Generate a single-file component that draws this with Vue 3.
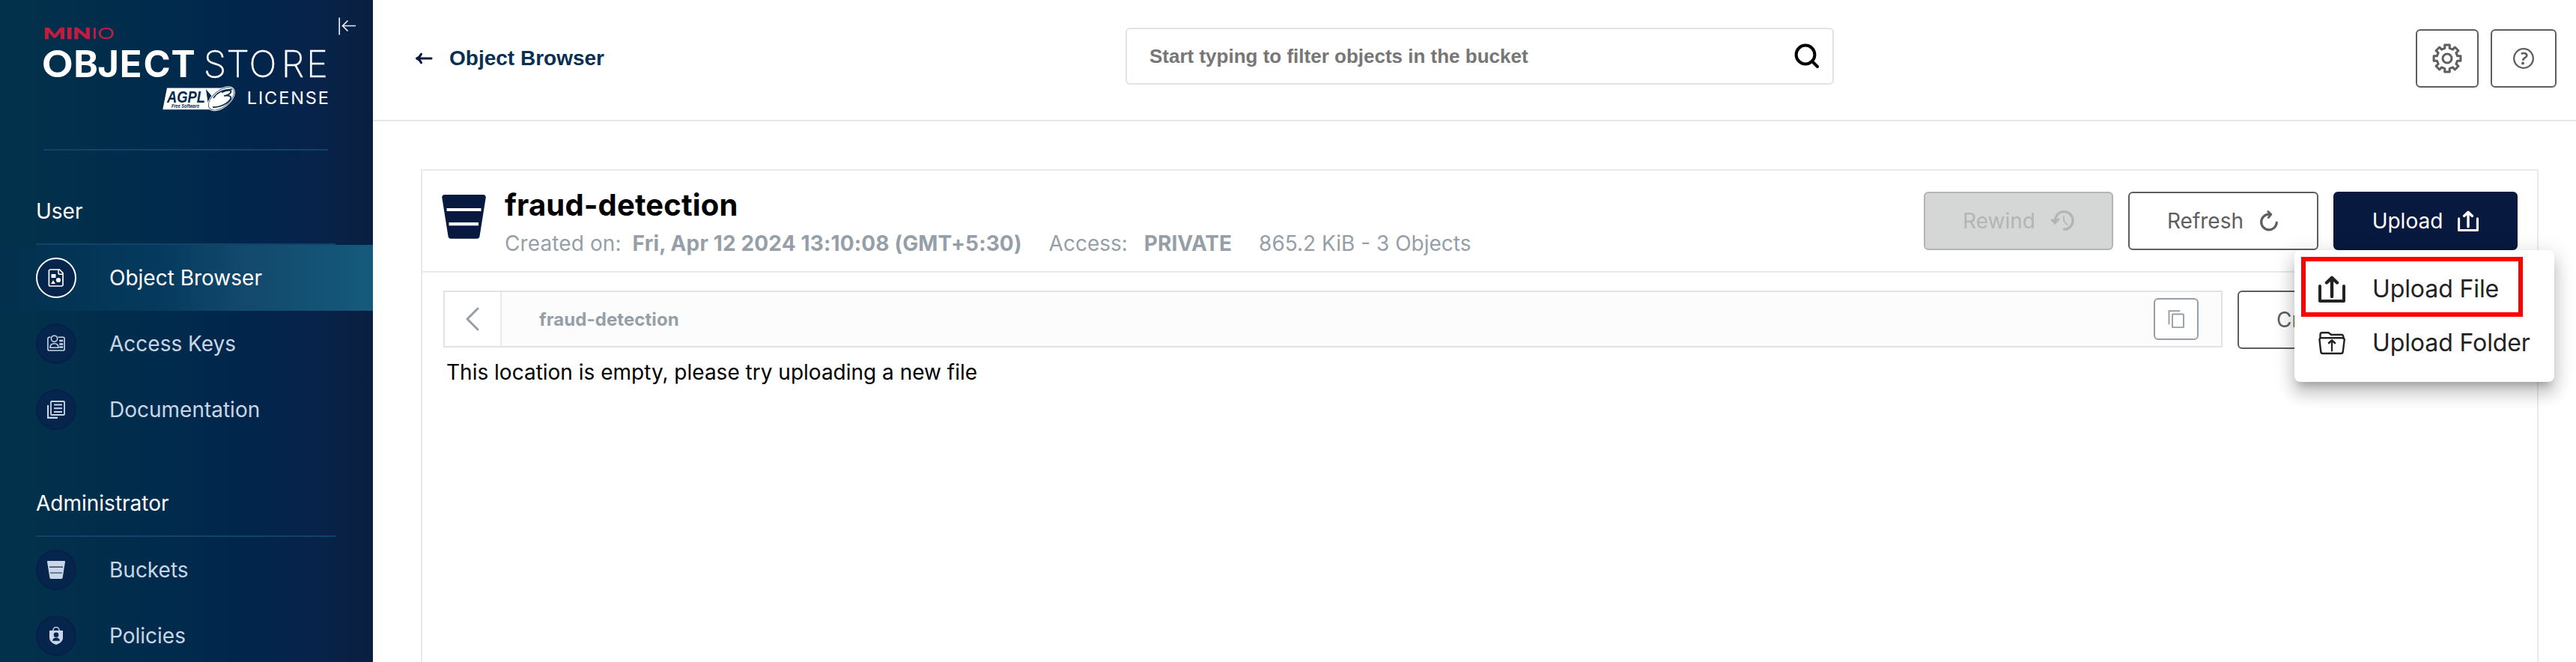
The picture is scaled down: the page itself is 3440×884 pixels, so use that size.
<script setup>
const groups = [
  {
    title: 'User',
    items: [
      { label: 'Object Browser', icon: 'browser', active: true },
      { label: 'Access Keys', icon: 'keys' },
      { label: 'Documentation', icon: 'docs' },
    ],
  },
  {
    title: 'Administrator',
    items: [
      { label: 'Buckets', icon: 'bucket' },
      { label: 'Policies', icon: 'policy' },
    ],
  },
]

// Eight-toothed gear outline centred on 20,20
function gearPath() {
  const pts = []
  const tooth = [[14, -13], [18.2, -10.5], [18.2, 10.5], [14, 13]]
  for (let k = 0; k < 8; k++) {
    for (const [r, off] of tooth) {
      const a = ((k * 45 + off) * Math.PI) / 180
      pts.push(`${(20 + r * Math.sin(a)).toFixed(2)} ${(20 - r * Math.cos(a)).toFixed(2)}`)
    }
  }
  return `M${pts.join('L')}Z`
}
const gear = gearPath()
</script>

<template>
  <div class="app">
    <aside class="sidebar">
      <svg class="collapse" viewBox="0 0 24 24" width="24" height="24">
        <path d="M1.2 0.5V23.5M5.5 11.5H23M12.5 4.5L5.5 11.5L12.5 18.5" fill="none" stroke="#e9edf3" stroke-width="1.7" />
      </svg>
      <div class="brand">
        <svg class="logo" viewBox="58 30 380 122" width="380" height="122">
          <g class="minio">
            <text class="minio-bold" x="57.5" y="51.5" textLength="64" lengthAdjust="spacingAndGlyphs">MIN</text>
            <text class="minio-thin" x="122" y="51.5" textLength="30.5" lengthAdjust="spacingAndGlyphs">IO</text>
          </g>
          <text class="word-bold" x="56.6 97.8 130.3 159.8 191.5 229.6" y="103.2">OB<tspan class="wide">JEC</tspan>T</text>
          <text class="word-thin" x="271.8 302.3 332.6 375.7 408.9" y="103.2">STORE</text>
          <g>
            <path d="M223 117.5H300L284 146.2H217.3Z" fill="#fff" />
            <text class="agpl" x="223" y="137.3" textLength="51" lengthAdjust="spacingAndGlyphs">AGPL</text>
            <text class="free" x="229" y="144" textLength="37" lengthAdjust="spacingAndGlyphs">Free Software</text>
            <path d="M275 119L277.6 137L282.5 128Z" fill="#01294b" />
            <ellipse cx="295.5" cy="131.8" rx="20.5" ry="11" transform="rotate(-39 295.5 131.8)" fill="#fff" stroke="#01294b" stroke-width="1.2" />
            <path d="M285 131C290 123 297 119 310 119.5" fill="none" stroke="#01294b" stroke-width="1.6" />
            <path d="M296 123.5C303 120 309 119.5 308.5 122.5C308 125.5 303 127.5 299 128C306 127 309.5 128.5 308 132C304 139 292 144 284 143" fill="none" stroke="#01294b" stroke-width="1.7" />
            <ellipse cx="295.5" cy="131.8" rx="21" ry="11.6" transform="rotate(-39 295.5 131.8)" fill="none" stroke="#fff" stroke-width="1" />
          </g>
          <text class="license" x="329.8" y="138.6" textLength="109" lengthAdjust="spacing">LICENSE</text>
        </svg>
      </div>

      <nav v-for="g in groups" :key="g.title" class="group">
        <h2 class="group-title">{{ g.title }}</h2>
        <div v-for="it in g.items" :key="it.label" class="item" :class="{ active: it.active }">
          <span class="bubble">
            <svg v-if="it.icon === 'browser'" viewBox="0 0 24 24" width="24" height="24">
              <path d="M4.2 1H16.5L21 5.6V21.2a1.8 1.8 0 0 1-1.8 1.8H4.2A1.8 1.8 0 0 1 2.4 21.2V2.8A1.8 1.8 0 0 1 4.2 1Z" fill="none" stroke="#fff" stroke-width="1.7" />
              <path d="M15 1V5.4a1.8 1.8 0 0 0 1.8 1.8H21" fill="none" stroke="#fff" stroke-width="1.5" />
              <path d="M5.5 7h6v5h-6ZM8 15.2L11 20H5Z" fill="#fff" />
              <circle cx="15" cy="15" r="3.1" fill="#fff" />
            </svg>
            <svg v-else-if="it.icon === 'keys'" viewBox="0 0 24 24" width="24" height="24" fill="none" stroke="#c8d6e8" stroke-width="1.6">
              <path d="M4.5 3.2H3A2.1 2.1 0 0 0 .9 5.3V18.9a2.1 2.1 0 0 0 2.1 2.1H21a2.1 2.1 0 0 0 2.1-2.1V5.3A2.1 2.1 0 0 0 21 3.2H14.5" />
              <circle cx="9.5" cy="5.3" r="4.1" />
              <path d="M4 17.3c0-4 2.6-5.6 5.5-5.600s5.500 1.600 5.500 5.600Z" />
              <path d="M16.2 8h5M16.2 12.5h5M16.2 16.5h5" stroke-width="2.6" />
            </svg>
            <svg v-else-if="it.icon === 'docs'" viewBox="0 0 24 24" width="24" height="24" fill="none" stroke="#c8d6e8">
              <rect x="5" y="1" width="18" height="18" rx="1" stroke-width="1.8" />
              <path d="M1 6V22.8H14" stroke-width="2.2" />
              <path d="M9 5.5H20M9 10.2H20M9 15H20" stroke-width="2" />
            </svg>
            <svg v-else-if="it.icon === 'bucket'" viewBox="0 0 24 24" width="24" height="24">
              <path d="M1 0H23a1 1 0 0 1 1 1.2L20.6 22.6a1.6 1.6 0 0 1-1.6 1.4H5a1.6 1.6 0 0 1-1.6-1.4L0 1.2A1 1 0 0 1 1 0Z" fill="#c8d6e8" />
              <path d="M3 8.2H21M4 16H20" stroke="#06254c" stroke-width="1.2" />
            </svg>
            <svg v-else viewBox="0 0 24 24" width="24" height="24">
              <path d="M8 5.5V4.5a4 4 0 0 1 8 0V5.5" fill="none" stroke="#c8d6e8" stroke-width="1.5" />
              <path d="M3 5H21V14.5C21 19.5 16.5 22.5 12 24C7.5 22.5 3 19.5 3 14.5Z" fill="#c8d6e8" />
              <circle cx="12" cy="10.7" r="3.3" fill="#06254c" />
              <path d="M7 18.800c.5-3 2.500-4.300 5-4.300s4.500 1.300 5 4.300Z" fill="#06254c" />
            </svg>
          </span>
          <span class="item-label">{{ it.label }}</span>
        </div>
      </nav>
    </aside>

    <main class="main">
      <header class="topbar">
        <div class="back">
          <svg viewBox="0 0 24 16" width="24" height="16">
            <path d="M2.5 8H22M8.5 2.2C7 5.5 5.5 7 2.5 8C5.5 9 7 10.5 8.5 13.8" fill="none" stroke="#081c42" stroke-width="3" stroke-linecap="round" stroke-linejoin="round" />
          </svg>
          <span>Object Browser</span>
        </div>
        <div class="search">
          <span>Start typing to filter objects in the bucket</span>
          <svg viewBox="0 0 34 34" width="34" height="34" fill="none" stroke="#000" stroke-width="4">
            <circle cx="15" cy="15" r="12.4" />
            <path d="M24 24L31 31" stroke-linecap="round" />
          </svg>
        </div>
        <div class="actions">
          <button class="square cog">
            <svg viewBox="0 0 40 40" width="40" height="40" fill="none" stroke="#5e5e5e">
              <path :d="gear" stroke-width="3" stroke-linejoin="round" />
              <circle cx="20" cy="20" r="6" stroke-width="3" />
            </svg>
          </button>
          <button class="square help">
            <svg viewBox="0 0 28 28" width="28" height="28">
              <circle cx="14" cy="14" r="12.8" fill="none" stroke="#5e5e5e" stroke-width="2.3" />
              <path d="M10.800 7.800C12 7.200 13.200 7 14.400 7C17 7 18.300 8.400 18.300 10.300C18.300 13.200 13.600 12.600 13 16.800" fill="none" stroke="#5e5e5e" stroke-width="2.7" />
              <circle cx="13" cy="20.5" r="1.9" fill="#5e5e5e" />
            </svg>
          </button>
        </div>
      </header>

      <section class="panel">
        <div class="panel-head">
          <svg class="bucket" viewBox="0 0 59 59" width="59" height="59">
            <path d="M3.5 0H55.5a3.3 3.3 0 0 1 3.2 3.9L50.5 55.5a4 4 0 0 1-4 3.3H12.5a4 4 0 0 1-4-3.3L.3 3.9A3.3 3.3 0 0 1 3.5 0Z" fill="#07193e" />
            <path d="M6.5 20H52.5M9.5 39.2H49" stroke="#fff" stroke-width="4.2" />
          </svg>
          <div class="titles">
            <h1>fraud-detection</h1>
            <div class="meta">
              <span class="created">Created on:</span>
              <b class="date">Fri, Apr 12 2024 13:10:08 (GMT+5:30)</b>
              <span class="access">Access:</span>
              <b class="private">PRIVATE</b>
              <span>865.2 KiB - 3 Objects</span>
            </div>
          </div>
          <div class="buttons">
            <button class="btn rewind">
              <span>Rewind</span>
              <svg viewBox="0 0 32 28" width="32" height="28" fill="none" stroke="#b3b4b3">
                <path d="M6.500 14A11.800 11.800 0 1 1 18.300 25.300" stroke-width="3.300" stroke-linecap="round" />
                <path d="M1.800 12.800L6.500 17.300L11.300 11.800L6.500 13.500Z" stroke-width="2.500" stroke-linejoin="round" fill="#b3b4b3" />
                <path d="M18 7.500V14L22.500 19" stroke-width="1.700" stroke-linecap="round" />
              </svg>
            </button>
            <button class="btn refresh">
              <span>Refresh</span>
              <svg viewBox="0 0 28 28" width="28" height="28" fill="none" stroke="#5e5e5e">
                <path d="M14 5.200A10.300 10.300 0 1 0 24.300 16" stroke-width="3.200" stroke-linecap="round" />
                <path d="M12.800 1.500L16.800 5.300L13.300 9.500" stroke-width="2.800" stroke-linecap="round" stroke-linejoin="round" />
              </svg>
            </button>
            <button class="btn primary">
              <span>Upload</span>
              <svg viewBox="0 0 36 36" width="28" height="28" fill="none" stroke="#fff" stroke-linecap="round" stroke-linejoin="round">
                <path d="M2 14V34H34V14" stroke-width="4" />
                <path d="M18 28V5M11 9.500L18 2.800L25 9.500" stroke-width="4.400" />
              </svg>
            </button>
          </div>
        </div>

        <div class="panel-body">
          <div class="path-row">
            <div class="path-bar">
              <span class="path-back">
                <svg viewBox="0 0 20 32" width="20" height="32">
                  <path d="M17 2L3 16L17 30" fill="none" stroke="#969fa8" stroke-width="3" stroke-linecap="round" stroke-linejoin="round" />
                </svg>
              </span>
              <span class="path-name">fraud-detection</span>
              <span class="copy">
                <svg viewBox="0 0 22 24" width="22" height="24" fill="none" stroke="#969fa8" stroke-width="1.9">
                  <path d="M1.5 18.5V1.3H15.5" stroke-linecap="round" />
                  <rect x="6" y="5.5" width="15" height="17.8" rx="1" />
                </svg>
              </span>
            </div>
            <button class="btn create"><span>Create new path</span></button>
          </div>
          <p class="empty">This location is empty, please try uploading a new file</p>
        </div>
      </section>

      <div class="menu">
        <div class="menu-item">
          <svg viewBox="0 0 36 36" width="36" height="36" fill="none" stroke="#222" stroke-linecap="round" stroke-linejoin="round">
            <path d="M2 14V34H34V14" stroke-width="4" />
            <path d="M18 28V5M11 9.500L18 2.800L25 9.500" stroke-width="4.400" />
          </svg>
          <span>Upload File</span>
        </div>
        <div class="menu-item">
          <svg viewBox="0 0 36 36" width="36" height="36" fill="none" stroke="#222" stroke-linecap="round" stroke-linejoin="round">
            <path d="M2.500 11V6.500A2.500 2.500 0 0 1 5 4.200H13.500L17 7H31A2.300 2.300 0 0 1 33.300 9.500V12" stroke-width="2.400" />
            <path d="M3.500 11.300H32.500A2.200 2.200 0 0 1 34.700 13.800L32.700 29.800A2.600 2.600 0 0 1 30 32H6A2.600 2.600 0 0 1 3.300 29.800L1.500 13.800A2.200 2.200 0 0 1 3.500 11.300Z" stroke-width="2.400" />
            <path d="M18 28.500V16" stroke-width="2.200" />
            <path d="M14 18L18 14.500L22 18" stroke-width="2.600" />
          </svg>
          <span>Upload Folder</span>
        </div>
        <div class="highlight"></div>
      </div>
    </main>
  </div>
</template>

<style>
body { margin: 0; background: #fff; }
</style>

<style scoped>
.app {
  display: flex;
  width: 3440px;
  height: 884px;
  overflow: hidden;
  font-family: Inter, sans-serif;
  font-size: 28px;
  color: #000;
}
.app svg { display: block; flex: none; }
.sidebar {
  position: relative;
  width: 498px;
  flex: none;
  background: linear-gradient(90deg, #02324b 0%, #012a4c 48%, #01254b 66%, #07234a 84%, #0a1f40 100%);
}
.collapse { position: absolute; left: 452px; top: 23px; }
.brand {
  margin: 0 60px 0 58px;
  padding-top: 30px;
  height: 169px;
  border-bottom: 2px solid #10426a;
}
.logo { overflow: visible; }
.minio { fill: #c51b3f; stroke: #c51b3f; }
.minio-bold { font: 900 21.5px Lato, sans-serif; stroke-width: .5; }
.minio-thin { font: 400 21.5px Lato, sans-serif; stroke-width: 0; }
.word-bold { font: 900 50px Lato, sans-serif; fill: #fff; }
.wide { font: 700 49px Inter, sans-serif; }
.word-thin { font: 200 49px Inter, sans-serif; fill: #fff; stroke: #fff; stroke-width: .3; }
.agpl { font: italic 700 22.5px "Liberation Sans", sans-serif; fill: #01294b; }
.free { font: italic 700 6.5px "Liberation Sans", sans-serif; fill: #01294b; }
.license { font: 400 23.5px Inter, sans-serif; fill: #fff; }

.group-title {
  margin: 0 50px 0 48px;
  height: 37px;
  line-height: 34px;
  padding: 64px 0 23px;
  font-size: 28px;
  font-weight: 400;
  color: #fff;
  border-bottom: 2px solid #10426a;
}
.item {
  display: flex;
  align-items: center;
  gap: 44px;
  height: 88px;
  padding-left: 48px;
  color: #c8d6e8;
}
.item.active {
  color: #fff;
  background: linear-gradient(90deg, #02304d 0%, #053a5e 42%, #12496c 66%, #155a7c 100%);
}
.bubble {
  box-sizing: border-box;
  display: flex;
  align-items: center;
  justify-content: center;
  width: 54px;
  height: 54px;
  border-radius: 50%;
  border: 2px solid #062048;
  background: #06254c;
}
.active .bubble { border-color: #fff; }

.main { position: relative; flex: 1; background: #fff; }
.topbar {
  box-sizing: border-box;
  display: flex;
  align-items: flex-start;
  height: 162px;
  padding: 37px 26px 0 56px;
  border-bottom: 2px solid #e5e5e5;
}
.back {
  display: flex;
  align-items: center;
  gap: 22px;
  width: 949px;
  height: 82px;
  font: 700 28px "Liberation Sans", sans-serif;
  color: #073052;
}
.search {
  box-sizing: border-box;
  display: flex;
  align-items: center;
  justify-content: space-between;
  width: 946px;
  height: 76px;
  padding: 0 17px 0 30px;
  border: 2px solid #e2e2e2;
  border-radius: 6px;
  font: 700 26px "Liberation Sans", sans-serif;
  color: #767676;
}
.actions { display: flex; gap: 16px; margin: 2px 0 0 auto; }
.square, .btn {
  box-sizing: border-box;
  display: flex;
  align-items: center;
  justify-content: center;
  height: 78px;
  padding: 0;
  border: 2px solid #5e5e5e;
  border-radius: 6px;
  background: #fff;
}
.cog { width: 84px; }
.help { width: 88px; }

.panel {
  box-sizing: border-box;
  margin: 64px 50px 0 64px;
  height: 700px;
  border: 2px solid #eaeaea;
}
.panel-head {
  box-sizing: border-box;
  display: flex;
  align-items: flex-start;
  height: 136px;
  padding: 22px 26px 0 26px;
  border-bottom: 2px solid #eaeaea;
}
.bucket { margin-top: 10px; }
.titles { margin-left: 25px; }
h1 { margin: 0; font-size: 40px; font-weight: 700; line-height: 48px; letter-spacing: .15px; }
.meta {
  display: flex;
  margin-top: 10px;
  line-height: 34px;
  white-space: nowrap;
  color: #969fa8;
}
.created { margin-right: 15px; letter-spacing: .1px; }
.date { margin-right: 36px; letter-spacing: .15px; }
.access { margin-right: 22px; }
.private { margin-right: 36px; }
.buttons { display: flex; gap: 20px; margin: 6px 0 0 auto; }
.btn {
  gap: 20px;
  font: 400 28px Inter, sans-serif;
  color: #5e5e5e;
  white-space: nowrap;
}
.rewind { width: 253px; background: #d5d7d6; border-color: #b3b4b3; color: #b3b4b3; }
.refresh { width: 254px; }
.primary { width: 246px; background: #07193e; border-color: #07193e; color: #fff; }

.panel-body { padding: 24px 26px 0 28px; }
.path-row { display: flex; gap: 20px; align-items: flex-start; }
.path-bar {
  box-sizing: border-box;
  display: flex;
  align-items: center;
  width: 2376px;
  height: 76px;
  padding-right: 30px;
  border: 2px solid #e2e2e2;
  background: #fcfcfc;
}
.path-back {
  display: flex;
  align-items: center;
  justify-content: center;
  width: 74px;
  height: 72px;
  border-right: 2px solid #eaeaea;
  background: #fff;
}
.path-name { margin-left: 50px; font-size: 24px; font-weight: 700; letter-spacing: .08px; color: #969fa8; }
.copy {
  box-sizing: border-box;
  display: flex;
  align-items: center;
  justify-content: center;
  width: 60px;
  height: 56px;
  margin-left: auto;
  border: 2px solid #969fa8;
  border-radius: 6px;
  background: #fff;
}
.create { width: 374px; justify-content: flex-start; padding-left: 50px; }
.empty { margin: 14px 0 0 4px; line-height: 34px; }

.menu {
  position: absolute;
  left: 2566px;
  top: 334px;
  box-sizing: border-box;
  width: 347px;
  height: 176px;
  padding: 16px 0;
  border-radius: 8px;
  background: #fff;
  box-shadow: 0 10px 10px -6px rgba(0, 0, 0, .2), 0 16px 20px 2px rgba(0, 0, 0, .14), 0 6px 28px 4px rgba(0, 0, 0, .12);
}
.menu-item {
  display: flex;
  align-items: center;
  gap: 36px;
  height: 72px;
  padding-left: 32px;
  font-size: 32px;
  line-height: 38px;
  letter-spacing: -.1px;
  white-space: nowrap;
  color: #222;
}
.menu-item span { padding-bottom: 1px; }
.highlight {
  position: absolute;
  left: 9px;
  top: 9px;
  box-sizing: border-box;
  width: 296px;
  height: 80px;
  border: 6px solid #f00;
}
</style>
